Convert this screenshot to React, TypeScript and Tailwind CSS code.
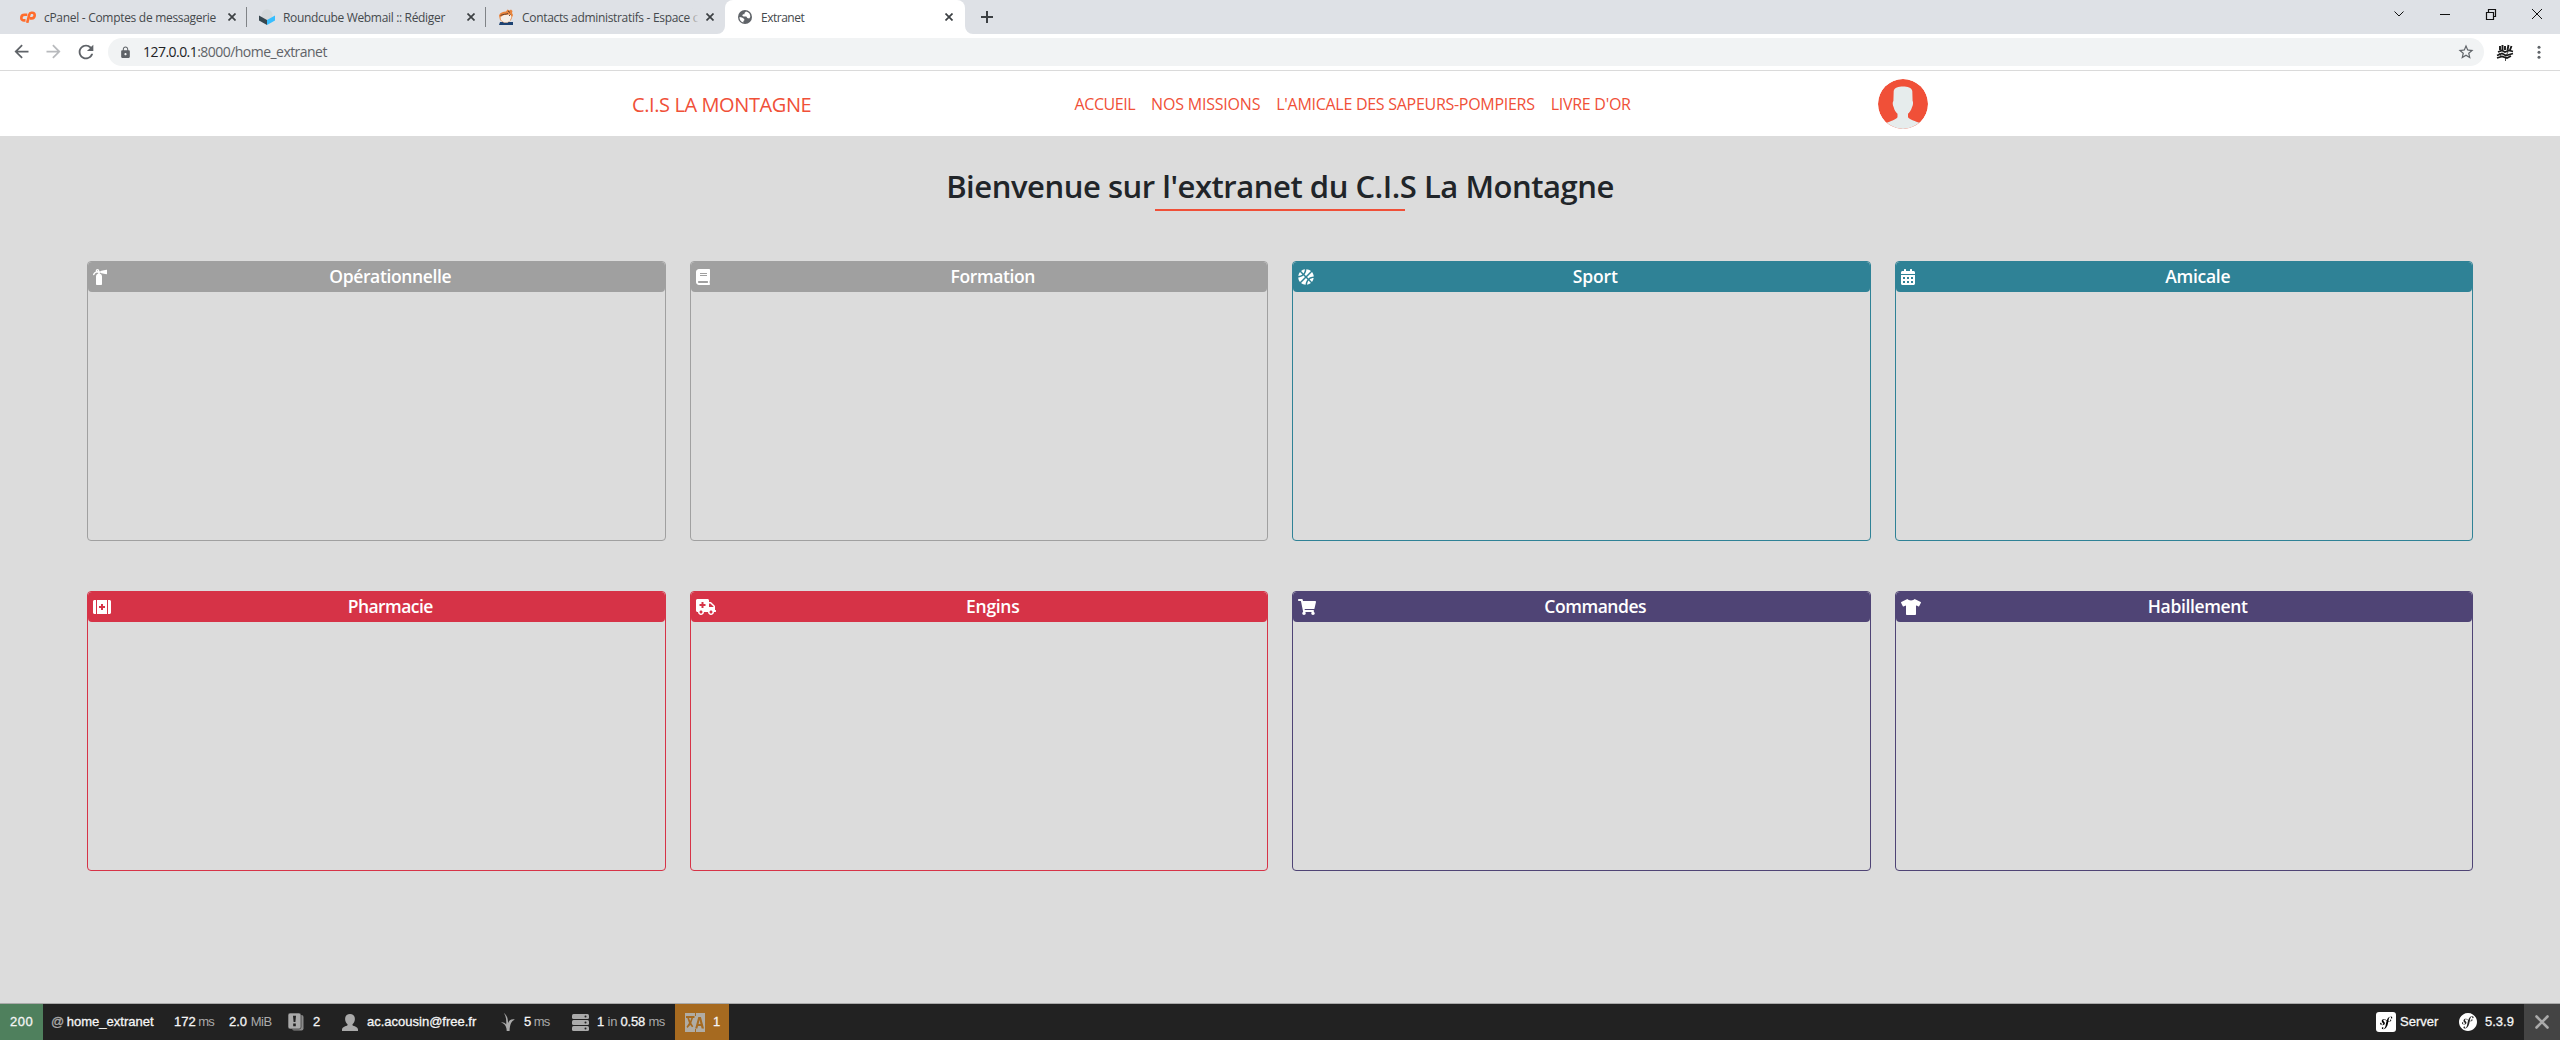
import type { ReactNode } from 'react'
import { MdRefresh, MdArrowBack, MdArrowForward, MdStarBorder, MdLock } from 'react-icons/md'
import { SiSymfony } from 'react-icons/si'
import {
  FaFireExtinguisher, FaBook, FaBasketballBall, FaCalendarAlt,
  FaFirstAid, FaAmbulance, FaShoppingCart, FaTshirt,
} from 'react-icons/fa'

function Cross() {
  return (
    <svg className="h-2 w-2 shrink-0" viewBox="0 0 8 8" stroke="#3c4043" strokeWidth="1.7">
      <path d="M.5 .5 7.5 7.5M7.5 .5 .5 7.5" />
    </svg>
  )
}

function CpanelIcon() {
  return (
    <svg className="h-3 w-4" viewBox="0 0 16 12" fill="none" stroke="#ff6c2c" strokeWidth="2.600">
      <path d="M7.300 3.800H4.600C2.600 3.800 1.300 5.200 1.300 6.900S2.600 9.400 4 9.400h1.500" />
      <path d="M7.200 11.800 9.300 3.600C9.600 2.400 10 1.800 11.300 1.800h1c1.500 0 2.400 1.100 2.400 2.500 0 1.800-1.200 3.100-2.900 3.100h-2" />
    </svg>
  )
}

function RoundcubeIcon() {
  return (
    <svg className="h-4 w-4" viewBox="0 0 16 16">
      <circle cx="8" cy="5.800" r="5.500" fill="#d5d9db" />
      <path d="M0 6.500 8 11v5L0 11.500z" fill="#37474f" />
      <path d="M16 6.500 8 11v5l8-4.500z" fill="#37beff" />
    </svg>
  )
}

function MascotIcon() {
  return (
    <svg className="h-4 w-4" viewBox="0 0 16 16">
      <path d="M2 13h13v3H1z" fill="#1d4373" />
      <path d="M1 6.500C2 3.500 5 2.500 8 2.500L9.500.5l2 1L13 .500l1.500 1.500-.5 2L15 6l-2 5-3 2.500H5.500L2 11z" fill="#e8843c" />
      <path d="M2.500 8 6 6l6.500-.5 1 2.500L12 11.500l-2.500 2H6L2.800 11z" fill="#f5efe8" />
      <path d="M2.500 6.500C5 5 8 5.500 10 4.500M12.500 5.500 11 7M10 2l2 1.500" stroke="#553a2c" fill="none" strokeWidth=".9" />
    </svg>
  )
}

function GlobeIcon() {
  return (
    <svg className="h-[14px] w-[14px]" viewBox="0 0 14 14">
      <circle cx="7" cy="7" r="7" fill="#5f6368" />
      <path
        d="M8 1.500 6.500 3v1.300H5L4.200 5.500l1.300 1h2.800l1 1.600 1.900.4L12.300 7A5.500 5.500 0 0 0 8 1.500M1.500 7c.8 0 2 .2 3 .7l1.700 1.200.2 1.300-1 .8v1.500A5.500 5.500 0 0 1 1.500 7"
        fill="#fff"
      />
    </svg>
  )
}

function Tab({ icon, title, spacing, active, separator, fade }: {
  icon: ReactNode; title: string; spacing: string; active?: boolean; separator?: boolean; fade?: boolean
}) {
  return (
    <div className={`relative flex h-[34px] items-center ${active ? 'w-[240px] rounded-t-lg bg-white' : 'w-[239px]'}`}>
      <div className="ml-3 flex w-4 justify-center">{icon}</div>
      <div className={`ml-2 w-[178px] whitespace-nowrap text-[12px] leading-[33px] text-[#45494d] ${spacing}`}>
        {title}
      </div>
      <div className="ml-[6px]"><Cross /></div>
      {fade && <div className="absolute left-[202px] h-5 w-[14px] bg-linear-to-r from-transparent to-[#dee1e6] to-75%" />}
      {separator && <div className="absolute right-0 h-5 w-px bg-[#808387]" />}
      {active && (
        <>
          <svg className="absolute bottom-0 -left-2 h-2 w-2" viewBox="0 0 8 8"><path d="M8 0v8H0a8 8 0 0 0 8-8" fill="#fff" /></svg>
          <svg className="absolute -right-2 bottom-0 h-2 w-2" viewBox="0 0 8 8"><path d="M0 0v8h8a8 8 0 0 1-8-8" fill="#fff" /></svg>
        </>
      )}
    </div>
  )
}

function WindowButton({ children }: { children: ReactNode }) {
  return (
    <div className="flex h-7 w-[46px] items-center justify-center">
      <svg className="h-3 w-3" viewBox="0 0 12 12" fill="none" stroke="#111" strokeWidth="1">{children}</svg>
    </div>
  )
}

function Browser() {
  return (
    <header className="font-['Open_Sans','Noto_Sans',sans-serif]">
      <div className="flex h-[34px] items-center bg-[#dee1e6] pl-2">
        <Tab icon={<CpanelIcon />} title="cPanel - Comptes de messagerie" spacing="tracking-[-0.3px]" separator />
        <Tab icon={<RoundcubeIcon />} title="Roundcube Webmail :: Rédiger" spacing="tracking-[-0.33px]" separator />
        <Tab icon={<MascotIcon />} title="Contacts administratifs - Espace c" spacing="tracking-[-0.32px]" fade />
        <Tab icon={<GlobeIcon />} title="Extranet" spacing="tracking-[-0.5px]" active />
        <svg className="ml-4 h-3 w-3" viewBox="0 0 12 12" stroke="#3c4043" strokeWidth="2"><path d="M6 0v12M0 6h12" /></svg>
        <div className="ml-auto flex h-[34px] items-start">
          <WindowButton><path d="M1.500 3.500 6 8l4.500-4.500" /></WindowButton>
          <WindowButton><path d="M1 6.500h10" /></WindowButton>
          <WindowButton><path d="M1.500 4.500h7v7h-7zM3.500 4.500v-3h7v7h-2" strokeWidth="1.200" /></WindowButton>
          <WindowButton><path d="M1 1l10 10M11 1 1 11" /></WindowButton>
        </div>
      </div>
      <div className="flex h-9 items-center bg-white text-[#5f6368]">
        <div className="ml-[11px] flex w-[97px] gap-[11px]">
          <MdArrowBack className="h-[21px] w-[21px]" />
          <MdArrowForward className="h-[21px] w-[21px] text-[#b8babd]" />
          <MdRefresh className="h-[22px] w-[22px]" />
        </div>
        <div className="flex h-7 w-[2376px] items-center rounded-full bg-[#f1f3f4]">
          <MdLock className="ml-[11px] h-[13px] w-[13px]" />
          <div className="ml-[11px] grow pb-px text-[14px] leading-[26px] tracking-[-0.54px]">
            <span className="text-[#202124]">127.0.0.1</span>:8000/home_extranet
          </div>
          <MdStarBorder className="mr-[9px] h-[18px] w-[18px]" />
        </div>
        <svg className="ml-3 h-[17px] w-[18px]" viewBox="0 0 18 17" fill="none" stroke="#1a1a1a">
          <path d="M4 6V2M6.500 6V1M9 6V2M11.500 6l1-5M14 6l1.500-4" strokeWidth="1.900" />
          <path d="M2 8l4-1.500 3 1.500 4-1.500 4 1M1 11.500l5-2 4 2 7-2M1 14l5-1.500 5 1.500 4-2" strokeWidth="1.700" />
          <path d="M9.500 13v4M3 9l2 3M12 8l-2 4" strokeWidth=".8" />
        </svg>
        <svg className="ml-[17px] h-4 w-4" viewBox="0 0 16 16" fill="#5f6368">
          <circle cx="8" cy="3.200" r="1.500" /><circle cx="8" cy="8.200" r="1.500" /><circle cx="8" cy="13.200" r="1.500" />
        </svg>
      </div>
      <div className="h-px bg-[#dadada]" />
    </header>
  )
}

function Navbar() {
  return (
    <nav className="flex h-[65px] items-center justify-between bg-white px-[632px] font-['Open_Sans','Noto_Sans',sans-serif] text-[#f05038]">
      <div className="pt-[3px] text-[20px] leading-7 tracking-[-0.4px] whitespace-nowrap">C.I.S LA MONTAGNE</div>
      <ul className="ml-4 flex pt-px text-[16px] leading-6 whitespace-nowrap">
        <li className="px-2 tracking-[-0.45px]">ACCUEIL</li>
        <li className="px-2 tracking-[-0.2px]">NOS MISSIONS</li>
        <li className="px-2 tracking-[-0.28px]">L'AMICALE DES SAPEURS-POMPIERS</li>
        <li className="px-2 tracking-[-0.27px]">LIVRE D'OR</li>
      </ul>
      <svg className="h-[50px] w-[50px] rounded-full" viewBox="0 0 50 50">
        <circle cx="25" cy="25" r="25" fill="#f05038" />
        <path
          d="M15.700 12C16.500 8.800 20.500 7.600 25 7.600s8.500 1.200 9.300 4.400L34.600 22c.8 1 .6 4.300-.6 6.200-.8 3-2.300 5-4 6.600v3.400c2 2.800 7.800 4 11.200 5.600A25 25 0 0 1 25 50 25 25 0 0 1 8.800 43.800C12.200 42.200 17.500 41 19.500 38.200v-3.400c-1.700-1.600-3.200-3.600-3.800-6.600-1.200-1.900-1.300-5.200-.3-6.200z"
          fill="#e6ecec"
        />
      </svg>
    </nav>
  )
}

const cards = [
  { title: 'Opérationnelle', Icon: FaFireExtinguisher, icon: 'w-[14px]', bg: 'bg-[#a0a0a0]', border: 'border-[#a0a0a0]', spacing: 'tracking-[-0.36px]' },
  { title: 'Formation', Icon: FaBook, icon: 'w-[14px]', bg: 'bg-[#a0a0a0]', border: 'border-[#a0a0a0]', spacing: 'tracking-[-0.4px]' },
  { title: 'Sport', Icon: FaBasketballBall, icon: 'w-4', bg: 'bg-[#2f8296]', border: 'border-[#2f8296]', spacing: 'tracking-[-0.15px]' },
  { title: 'Amicale', Icon: FaCalendarAlt, icon: 'w-[14px]', bg: 'bg-[#2f8296]', border: 'border-[#2f8296]', spacing: 'tracking-[-0.3px]' },
  { title: 'Pharmacie', Icon: FaFirstAid, icon: 'w-[18px]', bg: 'bg-[#d63347]', border: 'border-[#d63347]', spacing: 'tracking-[-0.55px]' },
  { title: 'Engins', Icon: FaAmbulance, icon: 'w-5', bg: 'bg-[#d63347]', border: 'border-[#d63347]', spacing: 'tracking-[-0.3px]' },
  { title: 'Commandes', Icon: FaShoppingCart, icon: 'w-[18px]', bg: 'bg-[#4f4475]', border: 'border-[#4f4475]', spacing: 'tracking-[-0.45px]' },
  { title: 'Habillement', Icon: FaTshirt, icon: 'w-5', bg: 'bg-[#4f4475]', border: 'border-[#4f4475]', spacing: 'tracking-[-0.35px]' },
]

function Main() {
  return (
    <main className="flex grow flex-col bg-[#dcdcdc] pt-[30px] font-['Open_Sans','Noto_Sans',sans-serif]">
      <h1 className="text-center text-[31px] leading-10 font-semibold tracking-[-0.46px] text-[#212529]">
        Bienvenue sur l'extranet du C.I.S La Montagne
      </h1>
      <div className="mx-auto mt-[3px] h-[2px] w-[250px] bg-[#f05038]" />
      <div className="mt-[50px] grid grid-cols-4 gap-x-6 gap-y-[50px] px-[87px]">
        {cards.map(({ title, Icon, icon, bg, border, spacing }) => (
          <section key={title} className={`h-[280px] rounded border ${border}`}>
            <div className={`flex h-[30px] items-center rounded-[4px] pl-[5px] text-white ${bg}`}>
              <div className="w-5 shrink-0">
                <Icon className={`h-4 ${icon}`} />
              </div>
              <h2 className={`grow pb-[2px] pl-[3px] text-center text-[17.5px] leading-[28px] font-semibold ${spacing}`}>
                {title}
              </h2>
            </div>
          </section>
        ))}
      </div>
    </main>
  )
}

function DebugBar() {
  return (
    <footer className="flex h-[37px] items-center border-t border-[#aaa] bg-[#222] font-['Liberation_Sans',sans-serif] text-[13px] leading-9 whitespace-nowrap text-[#f5f5f5] [-webkit-text-stroke:0.3px]">
      <div className="h-9 w-[43px] bg-[#4f805d] pl-[10px] tracking-[0.5px]">200</div>
      <div className="w-[131px] pl-2"><span className="text-[#aaa]">@</span> <span className="-ml-px">home_extranet</span></div>
      <div className="w-[55px]">172 <span className="-ml-px tracking-[-0.8px] text-[#aaa] [-webkit-text-stroke:0]">ms</span></div>
      <div className="w-[59px]">2.0 <span className="tracking-[-0.4px] text-[#aaa] [-webkit-text-stroke:0]">MiB</span></div>
      <svg className="h-[18px] w-4" viewBox="0 0 16 18">
        <rect x="4" y="2" width="11.500" height="15.500" rx="2" fill="#8a8a8a" />
        <rect x="0" y="0" width="13" height="16" rx="2" fill="#aaa" stroke="#222" strokeWidth=".6" />
        <path d="M5 2.800h3L7.400 9H5.600zM5.200 10.600h2.600v2.600H5.200z" fill="#222" />
      </svg>
      <div className="ml-[9px] w-[29px]">2</div>
      <svg className="h-[17px] w-4" viewBox="0 0 16 17" fill="#aaa">
        <path d="M8 0c2.900 0 4.900 2 4.900 4.900 0 2.100-1 4.300-2.400 5.300v1c1.600 1.200 5.200 1.200 5.500 4.300V17H0v-1.500c.3-3.100 3.900-3.100 5.500-4.300v-1C4.100 9.200 3.100 7 3.100 4.900 3.100 2 5.100 0 8 0" />
      </svg>
      <div className="ml-[9px] w-[134px]">ac.acousin@free.fr</div>
      <svg className="h-[18px] w-[14px]" viewBox="0 0 14 18" fill="#aaa">
        <path d="M2.800 0C6 2 7 6 7.100 10 8 7.500 10 5.800 13.800 6.500 10.500 8 8.800 11 8.600 18H5.700C5.600 13.500 4 11 0 9.300c2.300-.2 4 .6 5.200 2.200C5.500 7 5 3 2.800 0" />
      </svg>
      <div className="ml-[9px] w-[49px]">5 <span className="-ml-px tracking-[-0.8px] text-[#aaa] [-webkit-text-stroke:0]">ms</span></div>
      <svg className="-ml-px h-[17px] w-[17px]" viewBox="0 0 17 17">
        <g fill="#aaa"><rect width="17" height="5" rx="1.500" /><rect y="6" width="17" height="5" rx="1.500" /><rect y="12" width="17" height="5" rx="1.500" /></g>
        <g fill="#222"><circle cx="13.500" cy="2.500" r="1" /><circle cx="13.500" cy="8.500" r="1" /><circle cx="13.500" cy="14.500" r="1" /></g>
      </svg>
      <div className="ml-[8px] w-[78px] tracking-[-0.2px]">
        1 <span className="text-[#aaa] [-webkit-text-stroke:0]">in</span> 0.58 <span className="tracking-[-0.6px] text-[#aaa] [-webkit-text-stroke:0]">ms</span>
      </div>
      <div className="flex h-9 w-[54px] items-center bg-[#a66a20] pl-[10px]">
        <svg className="h-[19px] w-[20px]" viewBox="0 0 20 19">
          <path d="M0 0h20v19H0z" fill="#b0aca4" />
          <path d="M1 3h8.500v2H8L6.300 10l2 3.500-1.300.8-1.700-2.300L2.500 15l-1-1.200L4 10 2.300 5H1z" fill="#a66a20" />
          <path d="M4 5h2.400L5.200 8z" fill="#b0aca4" />
          <path d="M13.300 4h2.600L19 15.500h-2.300L16 13h-3l-.7 2.500H10.200zM10 0h1v3h-1zM10 16h1v3h-1z" fill="#a66a20" />
          <path d="M14.600 6.800l.9 4.200h-1.900z" fill="#b0aca4" />
        </svg>
        <span className="ml-2">1</span>
      </div>
      <div className="ml-auto flex items-center">
        <div className="relative flex h-5 w-5 items-center justify-center rounded-[3px] bg-white">
          <div className="absolute h-4 w-4 rounded-full bg-black" />
          <SiSymfony className="relative h-[19px] w-[19px] text-white" />
        </div>
        <div className="ml-1 w-[59px]">Server</div>
        <SiSymfony className="h-[18px] w-[18px] text-white" />
        <div className="ml-2 w-[39px]">5.3.9</div>
        <div className="flex h-9 w-9 items-center justify-center bg-[#444]">
          <svg className="h-[14px] w-[14px]" viewBox="0 0 14 14" stroke="#aaa" strokeWidth="2.600" strokeLinecap="round"><path d="M1.500 1.500l11 11M12.500 1.500l-11 11" /></svg>
        </div>
      </div>
    </footer>
  )
}

export default function App() {
  return (
    <div className="flex h-[1040px] w-[2560px] flex-col overflow-hidden">
      <Browser />
      <Navbar />
      <Main />
      <DebugBar />
    </div>
  )
}
